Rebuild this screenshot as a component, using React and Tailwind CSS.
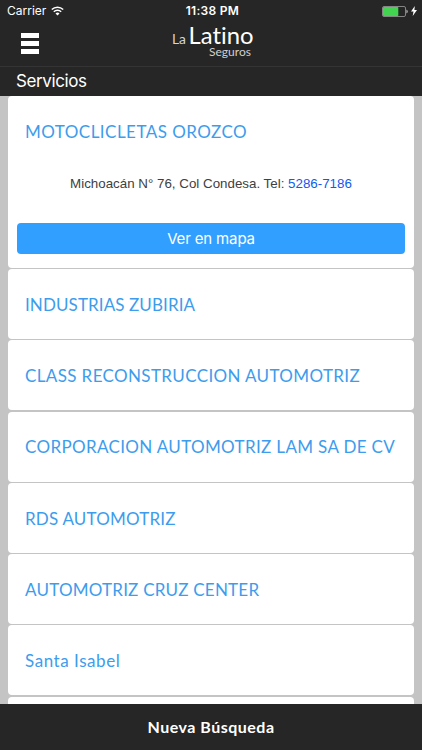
const SERVICES = [
  { name: "INDUSTRIAS ZUBIRIA", tracking: "tracking-[0.1px]" },
  { name: "CLASS RECONSTRUCCION AUTOMOTRIZ", tracking: "tracking-[0.37px]" },
  { name: "CORPORACION AUTOMOTRIZ LAM SA DE CV", tracking: "tracking-[0.35px]" },
  { name: "RDS AUTOMOTRIZ", tracking: "tracking-[0.2px]" },
  { name: "AUTOMOTRIZ CRUZ CENTER", tracking: "tracking-[0.22px]" },
  { name: "Santa Isabel", tracking: "tracking-[0.55px]" },
];

export default function App() {
  return (
    <div className="flex h-[750px] w-[422px] flex-col overflow-hidden bg-[#c4c4c4] font-['Inter',sans-serif]">
      <header className="h-24 shrink-0 bg-[#262626] text-white">
        <StatusBar />
        <NavBar />
        <div className="flex h-[30px] items-center border-t border-[#343434] pl-4">
          <h1 className="text-[17px] leading-none tracking-[-0.4px]">Servicios</h1>
        </div>
      </header>

      {/* Lista de servicios */}
      <main className="flex min-h-0 flex-1 flex-col gap-[1.25px] overflow-hidden px-2">
        <section className="h-[171.75px] shrink-0 rounded-[4px] bg-white px-[9px]">
          <div className="flex h-[71px] items-center pl-2">
            <ServiceName name="MOTOCLICLETAS OROZCO" tracking="tracking-[0.47px]" />
          </div>
          <p className="flex h-[35px] items-center justify-center font-['Liberation_Sans',sans-serif] text-[13.35px] whitespace-pre text-[#404040]">
            Michoacán N° 76, Col Condesa. Tel: <a href="tel:52867186" className="text-[#0b5cf0]">5286-7186</a>
          </p>
          <button className="mt-[21px] flex h-[31px] w-full items-center justify-center rounded-[4px] bg-[#309fff] pt-px text-[15px] tracking-[-0.15px] text-white">
            Ver en mapa
          </button>
        </section>

        {SERVICES.map((s) => (
          <section key={s.name} className="flex h-[70px] shrink-0 items-center rounded-[4px] bg-white pt-[1.5px] pl-[17px]">
            <ServiceName name={s.name} tracking={s.tracking} />
          </section>
        ))}
        <section className="h-[70px] shrink-0 rounded-[4px] bg-white" />
      </main>

      <footer className="flex h-[46px] shrink-0 items-center justify-center bg-[#262626]">
        <button className="font-['Lato',sans-serif] text-base font-bold tracking-[0.5px] text-white">Nueva Búsqueda</button>
      </footer>
    </div>
  );
}

function ServiceName({ name, tracking }) {
  return (
    <h2 className={`font-['Lato',sans-serif] text-[17px] leading-5 whitespace-nowrap text-[#3d9ced] ${tracking}`}>
      {name}
    </h2>
  );
}

function StatusBar() {
  return (
    <div className="grid h-[22px] grid-cols-3 items-center pr-[5px] pl-[7px]">
      <div className="flex items-center gap-[5px] text-xs">
        <span>Carrier</span>
        <svg className="h-[10px] w-[13px]" viewBox="0 0 13 10" fill="none" stroke="currentColor" strokeWidth="1.5">
          <path d="M.8 3.5a8.1 8.1 0 0 1 11.4 0M2.8 5.8a5.3 5.3 0 0 1 7.4 0" />
          <path d="M6.5 9.6 4.5 7.6a2.8 2.8 0 0 1 4 0z" fill="currentColor" stroke="none" />
        </svg>
      </div>
      <span className="pl-px text-center text-xs font-semibold tracking-[0.3px]">11:38 PM</span>
      <div className="flex items-center justify-end gap-[3px]">
        <svg className="h-[11px] w-[26px]" viewBox="0 0 26 11">
          <rect x=".5" y=".5" width="23" height="10" rx="1.5" fill="none" stroke="#858585" />
          <rect x="1" y="1" width="15.3" height="9" rx=".8" fill="#42d451" />
          <path d="M24.3 3.7h.5q1 .5 1 1.8t-1 1.8h-.5z" fill="#a5a5a5" />
        </svg>
        <svg className="h-[10px] w-[6px]" viewBox="0 0 6 10" fill="currentColor">
          <path d="M3.8 0 0 5.6h2.5L1.7 10 6 4.1H3.4z" />
        </svg>
      </div>
    </div>
  );
}

function NavBar() {
  return (
    <div className="grid h-11 grid-cols-[172px_82px_1fr]">
      <button aria-label="Menú" className="flex flex-col items-start gap-[3px] pt-[11px] pl-[20.5px]">
        <span className="h-[5px] w-[18.5px] bg-white" />
        <span className="h-[5px] w-[18.5px] bg-white" />
        <span className="h-[5px] w-[18.5px] bg-white" />
      </button>
      {/* Logo */}
      <svg className="h-11 w-[82px] [font-variant-ligatures:none]" viewBox="0 0 82 44" fill="#fff" fontFamily="Lato, sans-serif">
        <text x="0" y="22" fontSize="13.5" textLength="14" lengthAdjust="spacingAndGlyphs" fill="#d5d5d5">La</text>
        <text x="16.5" y="22" fontSize="23" textLength="65" lengthAdjust="spacingAndGlyphs">Latino</text>
        <text x="37" y="34" fontSize="12" textLength="42" lengthAdjust="spacingAndGlyphs" fill="#cfcfcf">Seguros</text>
      </svg>
    </div>
  );
}
